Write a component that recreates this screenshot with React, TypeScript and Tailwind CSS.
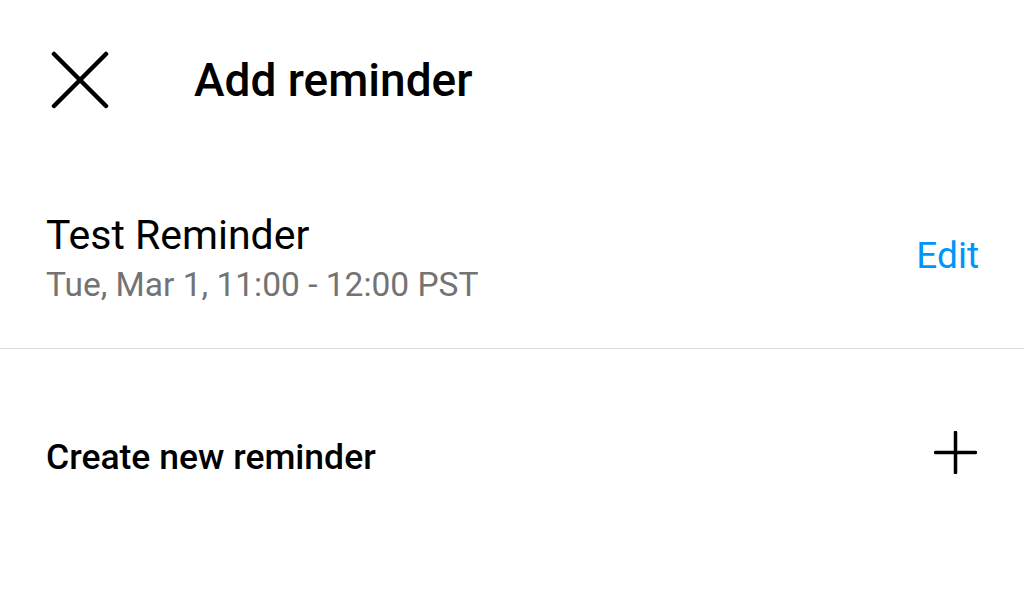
const font = { fontFamily: 'Roboto, "Noto Sans", sans-serif' };

export default function App() {
    return (
        <div className="w-[1024px] h-[603px] bg-white overflow-hidden" style={font}>
            <header className="flex items-center h-[160px] pb-[1px]">
                <div className="flex items-center justify-center w-[160px] h-[160px]">
                    <svg width="58" height="58" viewBox="0 0 58 58" className="text-black">
                        <path d="M3 3 L55 55 M55 3 L3 55" stroke="currentColor" strokeWidth="4.5" strokeLinecap="round" />
                    </svg>
                </div>
                <h1 className="ml-[34px] text-[46px] font-medium text-black leading-none">Add reminder</h1>
            </header>

            <div className="flex items-center justify-between h-[189px] px-[46px] pt-[12px] border-b border-[#dbdbdb]">
                <div>
                    <p className="text-[41px] text-black leading-[50px]">Test Reminder</p>
                    <p className="text-[33.5px] text-[#737373] leading-[50px]">Tue, Mar 1, 11:00 - 12:00 PST</p>
                </div>
                <button className="text-[37px] text-[#0095f6] mr-[-1px] mt-[-8px]">Edit</button>
            </div>

            <div className="flex items-center justify-between h-[214px] px-[46px]">
                <span className="text-[35.5px] font-medium text-black mt-[4px]">Create new reminder</span>
                <svg width="43" height="43" viewBox="0 0 43 43" className="text-black mb-[8px] mr-[1px]">
                    <path d="M21.5 1.5 V41.5 M1.5 21.5 H41.5" stroke="currentColor" strokeWidth="3.5" strokeLinecap="round" />
                </svg>
            </div>
        </div>
    );
}
